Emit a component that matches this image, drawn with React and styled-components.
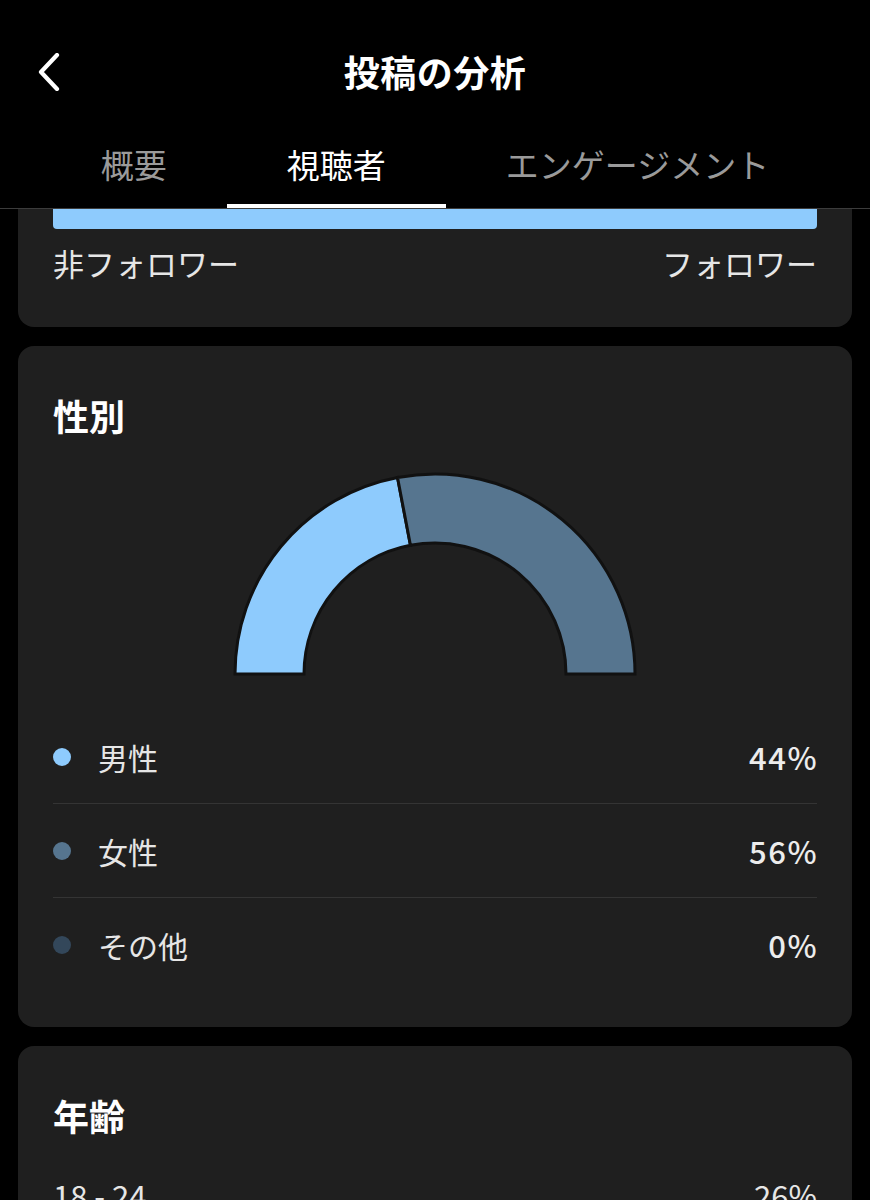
import React from "react";
import styled, { createGlobalStyle } from "styled-components";

const Global = createGlobalStyle`
  html, body { margin: 0; padding: 0; background: #000; }
  body {
    font-family: "Noto Sans CJK JP", "Noto Sans", sans-serif;
    color: #fff;
    -webkit-font-smoothing: antialiased;
  }
`;

const Page = styled.div`
  width: 870px;
  background: #000;
  min-height: 1200px;
`;

const Header = styled.header`
  background: #000;
  border-bottom: 1px solid #3c3c3c;
`;

const TopBar = styled.div`
  height: 144px;
  display: grid;
  grid-template-columns: 1fr auto 1fr;
  align-items: center;
`;

const BackButton = styled.button`
  justify-self: start;
  margin-left: 34px;
  background: none;
  border: none;
  padding: 0;
  width: 30px;
  height: 40px;
  display: flex;
  align-items: center;
  justify-content: center;
  color: #fff;
`;

const Title = styled.h1`
  margin: 0 0 2px;
  font-size: 36px;
  font-weight: 700;
  line-height: 44px;
  letter-spacing: 0.5px;
`;

const Tabs = styled.nav`
  display: flex;
  justify-content: center;
  height: 64px;
`;

const Tab = styled.div`
  padding: 0 60px;
  height: 64px;
  box-sizing: border-box;
  font-size: 33px;
  line-height: 40px;
  color: ${(p) => (p.$active ? "#fff" : "#9a9a9a")};
  border-bottom: 4px solid ${(p) => (p.$active ? "#fff" : "transparent")};
  white-space: nowrap;
`;

const Content = styled.main`
  padding: 0 18px;
  display: flex;
  flex-direction: column;
  gap: 19px;
`;

const Card = styled.section`
  background: #1f1f1f;
  border-radius: ${(p) => (p.$cutTop ? "0 0 16px 16px" : "16px")};
  padding: ${(p) => (p.$cutTop ? "0 35px 46px" : "47px 35px 36px")};
`;

const FollowerBar = styled.div`
  height: 20px;
  background: #8ecbfd;
  border-radius: 0 0 4px 4px;
`;

const BarLabels = styled.div`
  display: flex;
  justify-content: space-between;
  margin-top: 16px;
  font-size: 31px;
  line-height: 36px;
  color: #e6e6e6;
`;

const CardTitle = styled.h2`
  margin: 0;
  font-size: 36px;
  line-height: 44px;
  font-weight: 700;
`;

const ChartWrap = styled.div`
  display: flex;
  justify-content: center;
  margin-top: 33px;
`;

const Legend = styled.ul`
  list-style: none;
  margin: 33px 0 0;
  padding: 0;
`;

const LegendRow = styled.li`
  height: 93px;
  display: flex;
  align-items: center;
  & + & {
    border-top: 1px solid #343434;
  }
`;

const Dot = styled.span`
  width: 18px;
  height: 18px;
  border-radius: 50%;
  background: ${(p) => p.$color};
  margin-right: 27px;
  flex-shrink: 0;
`;

const RowLabel = styled.span`
  flex: 1;
  font-size: 30px;
  line-height: 36px;
  color: #e6e6e6;
`;

const RowValue = styled.span`
  font-size: 31px;
  line-height: 36px;
  font-weight: 500;
  letter-spacing: 1.5px;
  margin-right: -1px;
  color: #ececec;
`;

const AgeRow = styled.div`
  display: flex;
  justify-content: space-between;
  margin-top: 40px;
  font-size: 31px;
  line-height: 36px;
  color: #e6e6e6;
`;

function arcPath(cx, cy, rOut, rIn, a0, a1) {
  const pt = (r, a) => {
    const rad = (a * Math.PI) / 180;
    return [cx - r * Math.cos(rad), cy - r * Math.sin(rad)];
  };
  const [x0, y0] = pt(rOut, a0);
  const [x1, y1] = pt(rOut, a1);
  const [x2, y2] = pt(rIn, a1);
  const [x3, y3] = pt(rIn, a0);
  const large = a1 - a0 > 180 ? 1 : 0;
  return `M${x0} ${y0} A${rOut} ${rOut} 0 ${large} 1 ${x1} ${y1} L${x2} ${y2} A${rIn} ${rIn} 0 ${large} 0 ${x3} ${y3} Z`;
}

const data = [
  { label: "男性", value: 44, color: "#8ecbfd" },
  { label: "女性", value: 56, color: "#56758f" },
  { label: "その他", value: 0, color: "#33475a" },
];

function GenderChart() {
  const cx = 205;
  const cy = 204;
  let acc = 0;
  const segs = data
    .filter((d) => d.value > 0)
    .map((d) => {
      const a0 = acc;
      acc += (d.value / 100) * 180;
      return { ...d, a0, a1: acc };
    });
  return (
    <svg width="410" height="207" viewBox="0 0 410 207">
      {segs.map((s) => (
        <path
          key={s.label}
          d={arcPath(cx, cy, 200, 131, s.a0, s.a1)}
          fill={s.color}
          stroke="#111"
          strokeWidth="3"
          strokeLinejoin="miter"
        />
      ))}
    </svg>
  );
}

export default function App() {
  return (
    <Page>
      <Global />
      <Header>
        <TopBar>
          <BackButton aria-label="戻る">
            <svg width="24" height="38" viewBox="0 0 24 38">
              <path
                d="M20 2 L4 19 L20 36"
                fill="none"
                stroke="#fff"
                strokeWidth="4.2"
                strokeLinecap="round"
                strokeLinejoin="round"
              />
            </svg>
          </BackButton>
          <Title>投稿の分析</Title>
          <div />
        </TopBar>
        <Tabs>
          <Tab>概要</Tab>
          <Tab $active>視聴者</Tab>
          <Tab>エンゲージメント</Tab>
        </Tabs>
      </Header>
      <Content>
        <Card $cutTop>
          <FollowerBar />
          <BarLabels>
            <span>非フォロワー</span>
            <span>フォロワー</span>
          </BarLabels>
        </Card>
        <Card>
          <CardTitle>性別</CardTitle>
          <ChartWrap>
            <GenderChart />
          </ChartWrap>
          <Legend>
            {data.map((d) => (
              <LegendRow key={d.label}>
                <Dot $color={d.color} />
                <RowLabel>{d.label}</RowLabel>
                <RowValue>{d.value}%</RowValue>
              </LegendRow>
            ))}
          </Legend>
        </Card>
        <Card>
          <CardTitle>年齢</CardTitle>
          <AgeRow>
            <span>18 - 24</span>
            <span>26%</span>
          </AgeRow>
        </Card>
      </Content>
    </Page>
  );
}
